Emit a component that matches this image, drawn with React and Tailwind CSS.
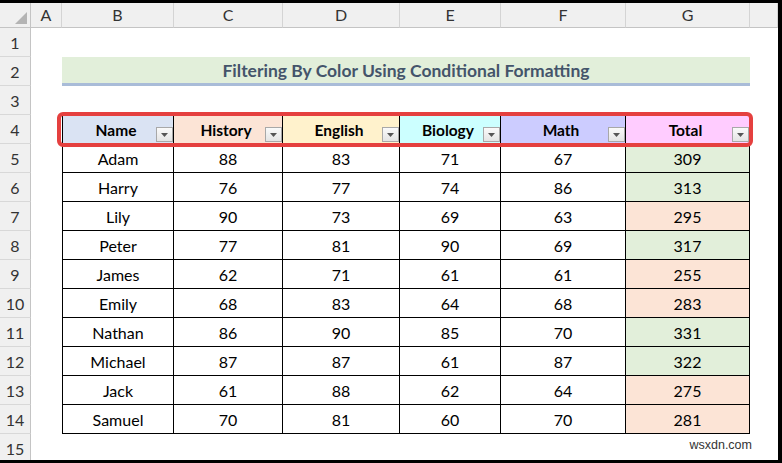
import React from 'react';

const cols = [
  { k: 'A', w: 'w-[31px]' },
  { k: 'B', w: 'w-[112px]' },
  { k: 'C', w: 'w-[109px]' },
  { k: 'D', w: 'w-[117px]' },
  { k: 'E', w: 'w-[101px]' },
  { k: 'F', w: 'w-[125px]' },
  { k: 'G', w: 'w-[124px]' },
  { k: '', w: 'w-[28px]' },
];

const heads = [
  { t: 'Name', w: 'w-[112px]', bg: 'bg-[#dae3f3]' },
  { t: 'History', w: 'w-[109px]', bg: 'bg-[#fce4d6]' },
  { t: 'English', w: 'w-[117px]', bg: 'bg-[#fff2cc]' },
  { t: 'Biology', w: 'w-[101px]', bg: 'bg-[#ccffff]' },
  { t: 'Math', w: 'w-[125px]', bg: 'bg-[#ccccff]' },
  { t: 'Total', w: 'w-[124px]', bg: 'bg-[#ffccff]' },
];

const data = [
  ['Adam', 88, 83, 71, 67, 309],
  ['Harry', 76, 77, 74, 86, 313],
  ['Lily', 90, 73, 69, 63, 295],
  ['Peter', 77, 81, 90, 69, 317],
  ['James', 62, 71, 61, 61, 255],
  ['Emily', 68, 83, 64, 68, 283],
  ['Nathan', 86, 90, 85, 70, 331],
  ['Michael', 87, 87, 61, 87, 322],
  ['Jack', 61, 88, 62, 64, 275],
  ['Samuel', 70, 81, 60, 70, 281],
];

function RowHead({ n }) {
  return (
    <div className="w-[31px] h-[29px] shrink-0 bg-[#f0f0f0] border-b border-r border-b-[#d8d8d8] border-r-[#c4c4c4] flex items-center justify-center pt-[1px] text-[16px] text-[#333]">
      {n}
    </div>
  );
}

function FilterBtn() {
  return (
    <div className="absolute right-0 bottom-[1px] w-[17px] h-[15px] border border-[#a8a8a8] bg-gradient-to-b from-[#fafafa] to-[#e4e4e4] flex items-center justify-center">
      <svg width="7" height="4" viewBox="0 0 7 4">
        <path d="M0 0 L7 0 L3.5 4 Z" fill="#555" />
      </svg>
    </div>
  );
}

function Empty({ w }) {
  return <div className={`${w} h-[29px] shrink-0`} />;
}

export default function App() {
  return (
    <div className="w-[782px] h-[463px] overflow-hidden bg-white border-t-[3px] border-r-[4px] border-b-[3px] border-black relative font-['Lato','Liberation_Sans',sans-serif] text-black">
      {/* column letters */}
      <div className="flex h-[25px]">
        <div className="w-[31px] h-[25px] shrink-0 bg-[#f0f0f0] border-r border-b border-[#c4c4c4] relative">
          <svg className="absolute right-[3px] bottom-[3px]" width="12" height="12" viewBox="0 0 12 12">
            <path d="M12 0 L12 12 L0 12 Z" fill="#b4b4b4" />
          </svg>
        </div>
        {cols.map((c, i) => (
          <div
            key={i}
            className={`${c.w} h-[25px] shrink-0 bg-[#f0f0f0] border-r border-b border-r-[#d4d4d4] border-b-[#c4c4c4] flex items-center justify-center text-[16px] text-[#333]`}
          >
            {c.k}
          </div>
        ))}
      </div>

      {/* row 1 */}
      <div className="flex">
        <RowHead n={1} />
        {cols.map((c, i) => <Empty key={i} w={c.w} />)}
      </div>

      {/* row 2 title */}
      <div className="flex">
        <RowHead n={2} />
        <Empty w="w-[31px]" />
        <div className="w-[688px] h-[29px] shrink-0 bg-[#e2efda] border-b-[3px] border-[#a9bcd8] flex items-center justify-center pt-[3px] text-[17.5px] font-bold text-[#44546a]">
          Filtering By Color Using Conditional Formatting
        </div>
        <Empty w="w-[28px]" />
      </div>

      {/* row 3 */}
      <div className="flex">
        <RowHead n={3} />
        {cols.map((c, i) => <Empty key={i} w={c.w} />)}
      </div>

      {/* row 4 headers */}
      <div className="flex relative">
        <RowHead n={4} />
        <Empty w="w-[31px]" />
        {heads.map((h, i) => (
          <div
            key={h.t}
            className={`${h.w} ${h.bg} h-[29px] shrink-0 relative border-r border-b border-black ${i === 0 ? 'border-l' : ''} flex items-center justify-center pr-[4px] pt-[3px] text-[15.5px] font-bold`}
          >
            {h.t}
            <FilterBtn />
          </div>
        ))}
        <Empty w="w-[28px]" />
        <div className="absolute left-[57px] top-[-3px] w-[696px] h-[35px] border-[4px] border-[#e5403f] rounded-[6px] pointer-events-none" />
      </div>

      {/* data rows */}
      {data.map((r, ri) => (
        <div key={r[0]} className="flex">
          <RowHead n={ri + 5} />
          <Empty w="w-[31px]" />
          {r.map((v, i) => (
            <div
              key={i}
              className={`${heads[i].w} h-[29px] shrink-0 border-r border-b border-black ${i === 0 ? 'border-l' : ''} ${
                i === 5 ? (v >= 300 ? 'bg-[#e2efda]' : 'bg-[#fce4d6]') : ''
              } flex items-center justify-center pt-[2px] text-[16px]`}
            >
              {v}
            </div>
          ))}
          <Empty w="w-[28px]" />
        </div>
      ))}

      {/* row 15 */}
      <div className="flex">
        <RowHead n={15} />
        {cols.map((c, i) => <Empty key={i} w={c.w} />)}
      </div>

      <div className="absolute right-[26px] bottom-[5px] text-[12.5px] text-[#333] font-['Liberation_Sans',sans-serif]">
        wsxdn.com
      </div>
    </div>
  );
}
